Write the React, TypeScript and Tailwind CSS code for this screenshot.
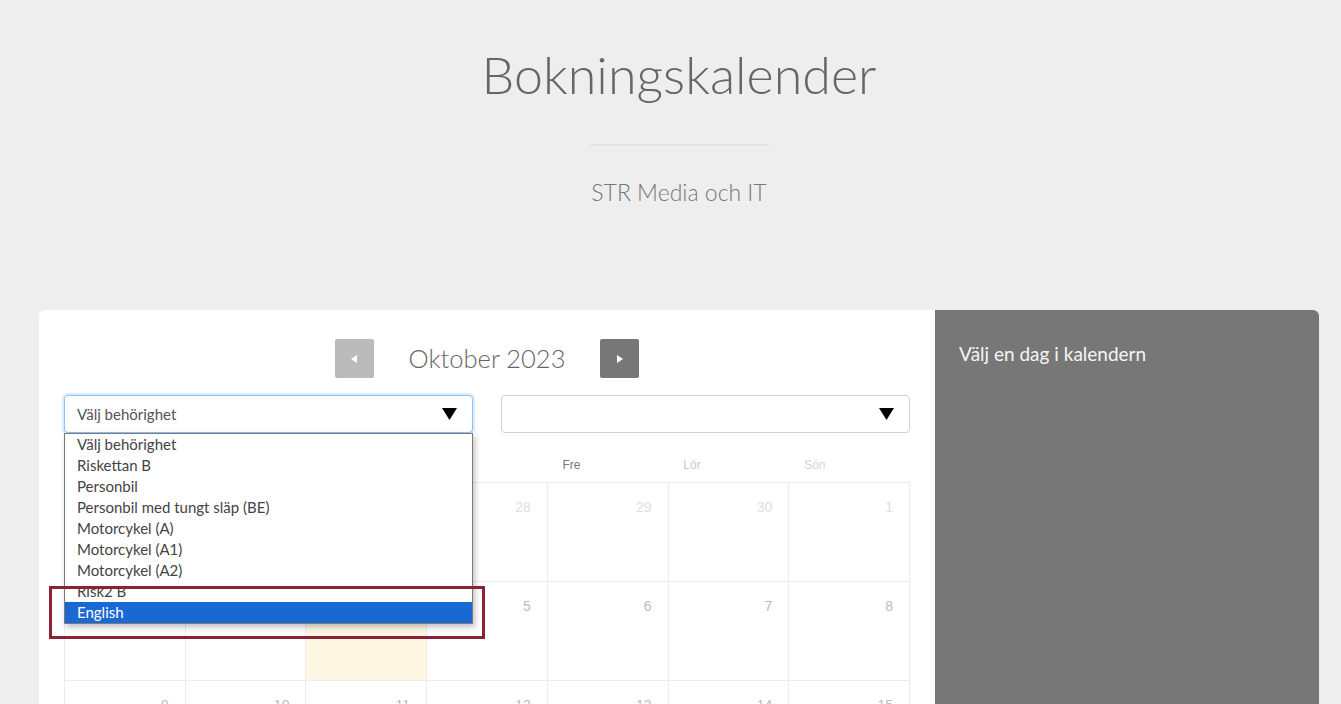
import React from "react";

const options = [
  "Välj behörighet",
  "Riskettan B",
  "Personbil",
  "Personbil med tungt släp (BE)",
  "Motorcykel (A)",
  "Motorcykel (A1)",
  "Motorcykel (A2)",
  "Risk2 B",
  "English",
];

const weekdays = ["Mån", "Tis", "Ons", "Tor", "Fre", "Lör", "Sön"];
const weekdayColors = [
  "text-[#777]",
  "text-[#777]",
  "text-[#777]",
  "text-[#777]",
  "text-[#777]",
  "text-[#c8c8c8]",
  "text-[#d6d6d6]",
];

type Day = { n: number; past: boolean; today?: boolean };

const weeks: Day[][] = [
  [25, 26, 27, 28, 29, 30, 1].map((n) => ({ n, past: true })),
  [
    { n: 2, past: true },
    { n: 3, past: true },
    { n: 4, past: false, today: true },
    { n: 5, past: false },
    { n: 6, past: false },
    { n: 7, past: false },
    { n: 8, past: false },
  ],
  [9, 10, 11, 12, 13, 14, 15].map((n) => ({ n, past: false })),
];

function Caret() {
  return (
    <svg width="15" height="12" viewBox="0 0 15 12" className="shrink-0">
      <polygon points="0,0 15,0 7.5,12" fill="#000" />
    </svg>
  );
}

function NavButton({ dir, light }: { dir: "prev" | "next"; light?: boolean }) {
  return (
    <button
      className={`flex h-[39px] w-[39px] items-center justify-center rounded-[2px] ${
        light ? "bg-[#bbbbbb]" : "bg-[#777777]"
      }`}
    >
      <svg width="6" height="8" viewBox="0 0 6 8">
        {dir === "prev" ? (
          <polygon points="6,0 6,8 0,4" fill="#fff" />
        ) : (
          <polygon points="0,0 0,8 6,4" fill="#fff" />
        )}
      </svg>
    </button>
  );
}

export default function App() {
  return (
    <div
      className="min-h-screen w-full overflow-hidden bg-[#eeeeee]"
      style={{ fontFamily: "Lato, 'Liberation Sans', sans-serif" }}
    >
      <div className="ml-[39px] w-[1280px]">
        <header className="flex flex-col items-center pt-[36px]">
          <h1 className="text-[52px] font-light leading-[76px] text-[#666]">
            Bokningskalender
          </h1>
          <div className="mt-[32px] h-[2px] w-[179px] bg-[#e4e4e4]" />
          <p className="mt-[31px] text-[23px] font-light leading-[30px] text-[#777]">
            STR Media och IT
          </p>
        </header>

        <div className="mt-[103px] flex">
          <div className="w-[896px] rounded-tl-[6px] bg-white px-[25px] pt-[29px]">
            <div className="flex items-center justify-center gap-[35px]">
              <NavButton dir="prev" light />
              <div className="text-[25.5px] font-light leading-[39px] text-[#666]">
                Oktober 2023
              </div>
              <NavButton dir="next" />
            </div>

            <div className="relative mt-[17px]">
              <div className="flex gap-[28px]">
                <div className="flex h-[38px] w-[409px] items-center justify-between rounded-[4px] border border-[#8ec2f7] bg-white pl-[12px] pr-[15px] shadow-[0_0_0_2px_rgba(150,200,250,0.35)]">
                  <span className="text-[15px] text-[#555]">Välj behörighet</span>
                  <Caret />
                </div>
                <div className="flex h-[38px] w-[409px] items-center justify-end rounded-[4px] border border-[#d0d0d0] bg-white pr-[15px]">
                  <Caret />
                </div>
              </div>

              <ul className="absolute left-0 top-[38px] z-20 w-[409px] border border-[#7a7a7a] bg-white shadow-[2px_3px_6px_rgba(0,0,0,0.25)]">
                {options.map((o, i) => (
                  <li
                    key={o}
                    className={`h-[21px] pl-[12px] text-[15px] leading-[21px] ${
                      i === options.length - 1
                        ? "bg-[#1a68d4] text-white"
                        : "text-[#444]"
                    }`}
                  >
                    {o}
                  </li>
                ))}
              </ul>

              <div className="absolute left-[-15px] top-[191px] z-30 h-[53px] w-[436px] border-[3px] border-[#8b2335]" />
            </div>

            <div
              className="grid grid-cols-7"
              style={{ fontFamily: "'Liberation Sans', Arial, sans-serif" }}
            >
              {weekdays.map((d, i) => (
                <div
                  key={d}
                  className={`h-[49px] pl-[15px] pt-[24px] text-[12px] leading-[16px] ${weekdayColors[i]}`}
                >
                  {d}
                </div>
              ))}
            </div>

            <div
              className="grid grid-cols-7 border-l border-t border-[#ececec]"
              style={{ fontFamily: "'Liberation Sans', Arial, sans-serif" }}
            >
              {weeks.flat().map((d, i) => (
                <div
                  key={i}
                  className={`h-[99px] border-b border-r border-[#ececec] pr-[16px] pt-[16px] text-right text-[14px] leading-[16px] ${
                    d.today ? "bg-[#fdf7e3]" : "bg-white"
                  } ${d.past ? "text-[#e0e0e0]" : "text-[#bbbbbb]"}`}
                >
                  {d.n}
                </div>
              ))}
            </div>
          </div>

          <div className="flex-1 rounded-tr-[6px] bg-[#777777] px-[24px] pt-[31px]">
            <p className="text-[19px] leading-[26px] text-[#f5f5f5]">
              Välj en dag i kalendern
            </p>
          </div>
        </div>
      </div>
    </div>
  );
}
